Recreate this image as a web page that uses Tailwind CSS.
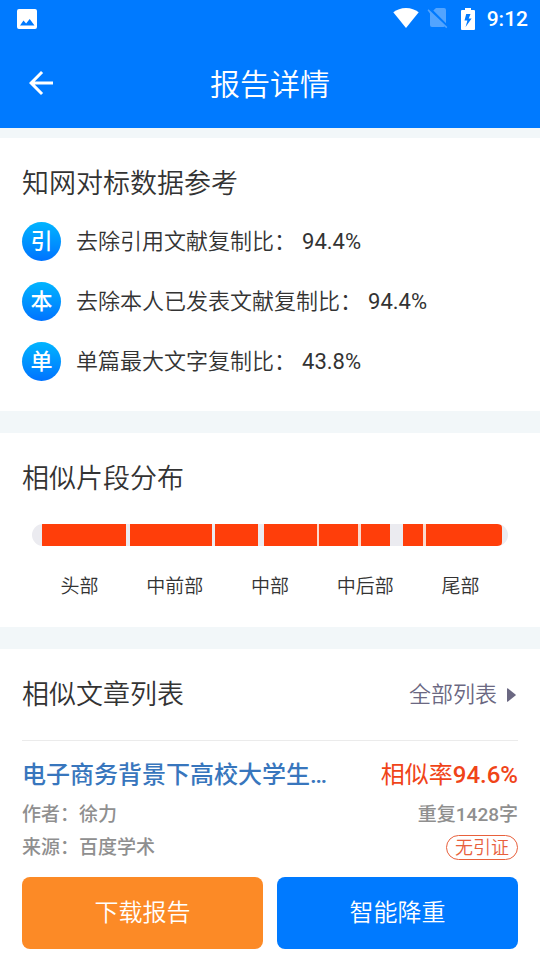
<!DOCTYPE html>
<html lang="zh-CN">
<head>
<meta charset="utf-8">
<meta name="viewport" content="width=device-width, initial-scale=1">
<title>报告详情</title>
<script src="https://cdn.jsdelivr.net/npm/@tailwindcss/browser@4"></script>
</head>
<body class="min-h-screen bg-white text-[#333] font-[Roboto,'Noto_Sans_CJK_SC',sans-serif] font-[350]">
<header class="bg-[#007aff] text-white">
  <div class="flex h-[38px] items-center justify-between pr-3 pl-[17px]">
    <svg class="h-5 w-5" viewBox="0 0 20 20" aria-hidden="true"><path fill="#fff" fill-rule="evenodd" d="M2 0h16a2 2 0 0 1 2 2v16a2 2 0 0 1-2 2H2a2 2 0 0 1-2-2V2a2 2 0 0 1 2-2zM3 16.500h14.500l-4.800-6.500-3.600 4.600-2.600-3z"/></svg>
    <div class="flex items-center">
      <svg class="h-[22px] w-[26px]" viewBox="0 0 26 22" aria-hidden="true"><path fill="#fff" d="M.3 4.300C3.800 1.600 8 0 13 0s9.200 1.600 12.700 4.300L13 20z"/></svg>
      <svg class="ml-2 h-[22px] w-[22px]" viewBox="0 0 22 22" aria-hidden="true"><path fill="#fff" fill-opacity=".32" d="M9 0h8a2 2 0 0 1 2 2v13.200L6.300 2.500zM1.500 1.200L20.300 19l-1 1.200L17.500 18.500a2 2 0 0 1-1 .5H5a2 2 0 0 1-2-2V5.500L.5 2.300z"/></svg>
      <svg class="ml-3 h-[22px] w-[14px]" viewBox="0 0 14 22" aria-hidden="true"><path fill="#fff" fill-rule="evenodd" d="M4 0h6v2H13a1 1 0 0 1 1 1v18a1 1 0 0 1-1 1H1a1 1 0 0 1-1-1V3a1 1 0 0 1 1-1h3zM5.200 6L3.500 12.500h2.900L4.600 19l6-8.500H7.700L9.500 6z"/></svg>
      <time class="ml-3 text-[21px] leading-6 font-medium">9:12</time>
    </div>
  </div>
  <div class="grid h-[90px] grid-cols-[48px_1fr_48px] items-center px-[17px]">
    <a href="#" aria-label="返回" class="flex h-12 w-12 items-center justify-center">
      <svg class="h-9 w-9" viewBox="0 0 24 24" aria-hidden="true"><path fill="#fff" d="M20 11H7.830l5.590-5.590L12 4l-8 8 8 8 1.410-1.410L7.830 13H20z"/></svg>
    </a>
    <h1 class="pt-1 text-center text-[30px] leading-10 font-[350]">报告详情</h1>
  </div>
</header>

<main class="border-t-10 border-[#f2f7f9]">
  <section class="px-[22px] pt-[26px] pb-[30px]">
    <h2 class="text-[27px] leading-10 font-[350]">知网对标数据参考</h2>
    <ul class="mt-[18px] flex flex-col gap-[21px] text-[22px]">
      <li class="flex h-[39px] items-center gap-[15px]">
        <span class="flex h-[39px] w-[39px] items-center justify-center rounded-full bg-linear-to-b from-[#00b4ff] to-[#0072ff] font-medium text-white">引</span>
        <p class="flex gap-1.5"><span>去除引用文献复制比：</span><span class="font-normal">94.4%</span></p>
      </li>
      <li class="flex h-[39px] items-center gap-[15px]">
        <span class="flex h-[39px] w-[39px] items-center justify-center rounded-full bg-linear-to-b from-[#00b4ff] to-[#0072ff] font-medium text-white">本</span>
        <p class="flex gap-1.5"><span>去除本人已发表文献复制比：</span><span class="font-normal">94.4%</span></p>
      </li>
      <li class="flex h-[39px] items-center gap-[15px]">
        <span class="flex h-[39px] w-[39px] items-center justify-center rounded-full bg-linear-to-b from-[#00b4ff] to-[#0072ff] font-medium text-white">单</span>
        <p class="flex gap-1.5"><span>单篇最大文字复制比：</span><span class="font-normal">43.8%</span></p>
      </li>
    </ul>
  </section>

  <section class="border-t-22 border-[#f2f7f9] px-[22px] pt-[26px] pb-[26px]">
    <h2 class="text-[27px] leading-10 font-[350]">相似片段分布</h2>
    <div class="mx-2.5 mt-[25px] flex h-[22px] overflow-hidden rounded-full bg-[#ebebf0]">
      <span style="flex:10"></span>
      <span class="bg-[#ff3e0a]" style="flex:84"></span>
      <span style="flex:4"></span>
      <span class="bg-[#ff3e0a]" style="flex:82"></span>
      <span style="flex:3"></span>
      <span class="bg-[#ff3e0a]" style="flex:43"></span>
      <span style="flex:6"></span>
      <span class="bg-[#ff3e0a]" style="flex:53"></span>
      <span class="bg-[#fbd9cd]" style="flex:2"></span>
      <span class="bg-[#ff3e0a]" style="flex:39"></span>
      <span class="bg-[#fbd9cd]" style="flex:3"></span>
      <span class="bg-[#ff3e0a]" style="flex:29"></span>
      <span style="flex:13"></span>
      <span class="bg-[#ff3e0a]" style="flex:20"></span>
      <span class="bg-[#fbd9cd]" style="flex:3"></span>
      <span class="rounded-r-sm bg-[#ff3e0a]" style="flex:76"></span>
      <span style="flex:6"></span>
    </div>
    <ul class="mx-2.5 mt-[27px] grid grid-cols-5 text-center text-[19px] leading-7">
      <li>头部</li><li>中前部</li><li>中部</li><li>中后部</li><li>尾部</li>
    </ul>
  </section>

  <section class="border-t-22 border-[#f2f7f9] px-[22px] pt-[26px] pb-[11px]">
    <div class="flex items-center justify-between border-b border-[#ebebeb] pb-[25px]">
      <h2 class="text-[27px] leading-10 font-[350]">相似文章列表</h2>
      <a href="#" class="flex items-center gap-[10px] pr-[2px] text-[22px] leading-9 text-[#6b6882]">全部列表
        <svg class="h-[14px] w-[9px]" viewBox="0 0 9 14" aria-hidden="true"><path fill="currentColor" d="M0 .8Q0-.2 1 .5L8.500 6.400q.6.600 0 1.200L1 13.500q-1 .7-1-.3z"/></svg>
      </a>
    </div>
    <article class="mt-4">
      <div class="flex items-center justify-between gap-4 text-[24px] leading-9">
        <h3 class="font-medium text-[#3876bd]"><a href="#">电子商务背景下高校大学生…</a></h3>
        <p class="shrink-0 text-[#f04418]"><span class="font-normal">相似率</span><span class="font-medium">94.6%</span></p>
      </div>
      <div class="mt-[5px] flex items-center justify-between text-[19px] leading-[33px] font-medium text-[#8f8f8f]">
        <p>作者：徐力</p>
        <p>重复1428字</p>
      </div>
      <div class="flex items-center justify-between text-[19px] leading-[33px] font-medium text-[#8f8f8f]">
        <p>来源：百度学术</p>
        <span class="rounded-full border border-[#e8603c] px-2 text-[18px] leading-[23px] font-[350] text-[#e8603c]">无引证</span>
      </div>
    </article>
    <div class="mt-[13px] grid grid-cols-2 gap-[14px] text-[24px] text-white">
      <button type="button" class="h-[72px] rounded-lg bg-[#fc8a26]">下载报告</button>
      <button type="button" class="h-[72px] rounded-lg bg-[#007aff]">智能降重</button>
    </div>
  </section>
</main>
</body>
</html>
